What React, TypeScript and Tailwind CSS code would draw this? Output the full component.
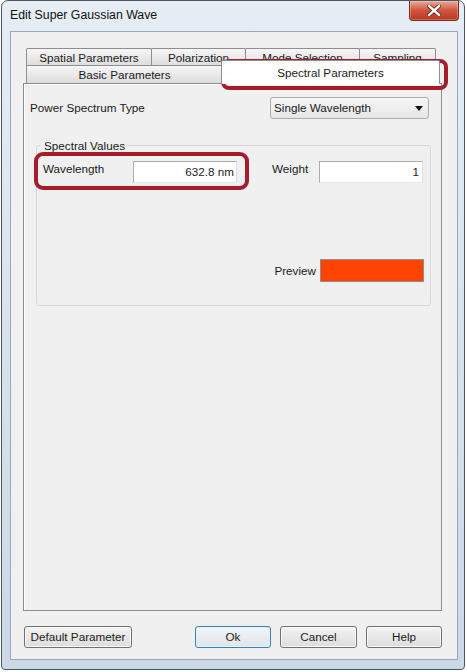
import React from "react";

function Tab({ w, children, first }: { w: string; children: React.ReactNode; first?: boolean }) {
  return (
    <div
      className={
        "h-[18px] border border-b-0 border-[#8c8e94] rounded-t-[2px] bg-gradient-to-b from-[#f7f7f7] to-[#dcdcdc] flex items-center justify-center leading-[14px] " +
        w +
        (first ? "" : " -ml-px")
      }
    >
      {children}
    </div>
  );
}

function Btn({ w, children, focused }: { w: string; children: React.ReactNode; focused?: boolean }) {
  return (
    <div
      className={
        "h-[22px] rounded-[3px] border flex items-center justify-center leading-[14px] " +
        w +
        (focused
          ? " border-[#3c7fb1] bg-gradient-to-b from-[#f2f6f9] to-[#dfe5ea] shadow-[inset_0_0_0_1px_#e6f3fb]"
          : " border-[#707070] bg-gradient-to-b from-[#f3f3f3] to-[#dddddd] shadow-[inset_0_0_0_1px_#fbfbfb]")
      }
    >
      {children}
    </div>
  );
}

export default function App() {
  return (
    <div className="relative w-[467px] h-[672px] bg-white font-['Liberation_Sans',Arial,sans-serif] text-[11.7px] text-[#1b1b1b] overflow-hidden">
      <div className="ml-[1px] w-[464px] h-[670px] flex flex-col rounded-t-[7px] rounded-b-[4px] border border-[#4a5562] bg-gradient-to-b from-[#e6edf5] to-[#cbd8e6]">
        {/* title bar */}
        <div className="h-[30px] flex justify-between items-start">
          <span className="ml-[8px] mt-[7px] text-[12.3px] leading-[15px] text-[#111]">Edit Super Gaussian Wave</span>
          <div className="mr-[5px] w-[50px] h-[20px] rounded-b-[4px] border border-t-0 border-[#7d2c22] bg-gradient-to-b from-[#e9a897] via-[#cf5440] to-[#b9381f] flex items-center justify-center shadow-[inset_0_0_0_1px_rgba(255,255,255,0.25)]">
            <svg width="14" height="11" viewBox="0 0 14 11">
              <path d="M2 1 L12 10 M12 1 L2 10" stroke="#5a1c14" strokeWidth="4" strokeLinecap="square" />
              <path d="M2 1 L12 10 M12 1 L2 10" stroke="#ffffff" strokeWidth="2.4" strokeLinecap="square" />
            </svg>
          </div>
        </div>
        {/* client */}
        <div className="ml-[8px] mr-[6px] h-[629px] border border-[#9aa8b8] bg-[#f0f0f0] flex flex-col">
          <div className="ml-[12px] mt-[16px] w-[419px] flex flex-col">
            {/* tab headers */}
            <div className="h-[35px] flex flex-col">
              <div className="flex ml-[3px]">
                <Tab w="w-[126px]" first>Spatial Parameters</Tab>
                <Tab w="w-[95px]">Polarization</Tab>
                <Tab w="w-[115px]">Mode Selection</Tab>
                <Tab w="w-[77px]">Sampling</Tab>
              </div>
              <div className="flex items-end h-[18px] -mt-px ml-[3px]">
                <div className="w-[197px] h-[18px] border border-b-0 border-[#8c8e94] rounded-t-[2px] bg-gradient-to-b from-[#f7f7f7] to-[#dcdcdc] flex items-center justify-center leading-[14px]">
                  Basic Parameters
                </div>
                <div className="relative z-10 -ml-[2px] -mb-px w-[219px] h-[24px] border border-b-0 border-[#8c8e94] rounded-t-[2px] bg-white flex items-start justify-center pt-[5px] leading-[14px]">
                  Spectral Parameters
                </div>
              </div>
            </div>
            {/* panel */}
            <div className="h-[528px] border border-[#898c95] bg-[#f0f0f0] shadow-[inset_1px_1px_0_#ffffff] flex flex-col">
              <div className="mt-[13px] flex items-center justify-between pl-[6px] pr-[12px]">
                <span className="leading-[14px]">Power Spectrum Type</span>
                <div className="w-[159px] h-[22px] rounded-[3px] border border-[#acacac] bg-gradient-to-b from-[#f6f6f6] to-[#e7e7e7] flex items-center justify-between pl-[3px] pr-[5px]">
                  <span className="leading-[14px]">Single Wavelength</span>
                  <svg width="8" height="5" viewBox="0 0 8 5">
                    <path d="M0 0 H8 L4 5 Z" fill="#111" />
                  </svg>
                </div>
              </div>
              <fieldset className="ml-[12px] mt-[19px] w-[395px] border border-[#d6dadf] rounded-[3px] pb-[23px]">
                <legend className="ml-[4px] px-[3px] leading-[15px]">Spectral Values</legend>
                <div className="mt-[8px] flex items-start pl-[6px]">
                  <span className="mt-[1px] w-[90px] leading-[14px]">Wavelength</span>
                  <div className="w-[104px] h-[22px] bg-white border border-[#abadb3] border-r-[#dbdfe6] border-b-[#e3e9ef] flex items-center justify-end pr-[2px] leading-[14px]">
                    632.8 nm
                  </div>
                  <span className="mt-[1px] ml-[35px] w-[47px] leading-[14px]">Weight</span>
                  <div className="w-[104px] h-[22px] bg-white border border-[#abadb3] border-r-[#dbdfe6] border-b-[#e3e9ef] flex items-center justify-end pr-[3px] leading-[14px]">
                    1
                  </div>
                </div>
                <div className="mt-[76px] flex items-center justify-end pr-[6px] gap-[4px]">
                  <span className="leading-[14px]">Preview</span>
                  <div className="w-[104px] h-[23px] bg-[#fe4200] border border-[#8d8d8d]" />
                </div>
              </fieldset>
            </div>
          </div>
          {/* buttons */}
          <div className="ml-[13px] mt-[15px] w-[418px] flex items-center">
            <Btn w="w-[108px]">Default Parameter</Btn>
            <div className="ml-auto flex gap-[9px]">
              <Btn w="w-[76px]" focused>Ok</Btn>
              <Btn w="w-[77px]">Cancel</Btn>
              <Btn w="w-[76px]">Help</Btn>
            </div>
          </div>
        </div>
      </div>
      {/* annotation highlights */}
      <div className="absolute left-[221px] top-[59px] w-[227px] h-[31px] border-[4px] border-[#a51d2d] rounded-[8px]" />
      <div className="absolute left-[34px] top-[152px] w-[215px] h-[38px] border-[4px] border-[#a51d2d] rounded-[9px]" />
    </div>
  );
}
